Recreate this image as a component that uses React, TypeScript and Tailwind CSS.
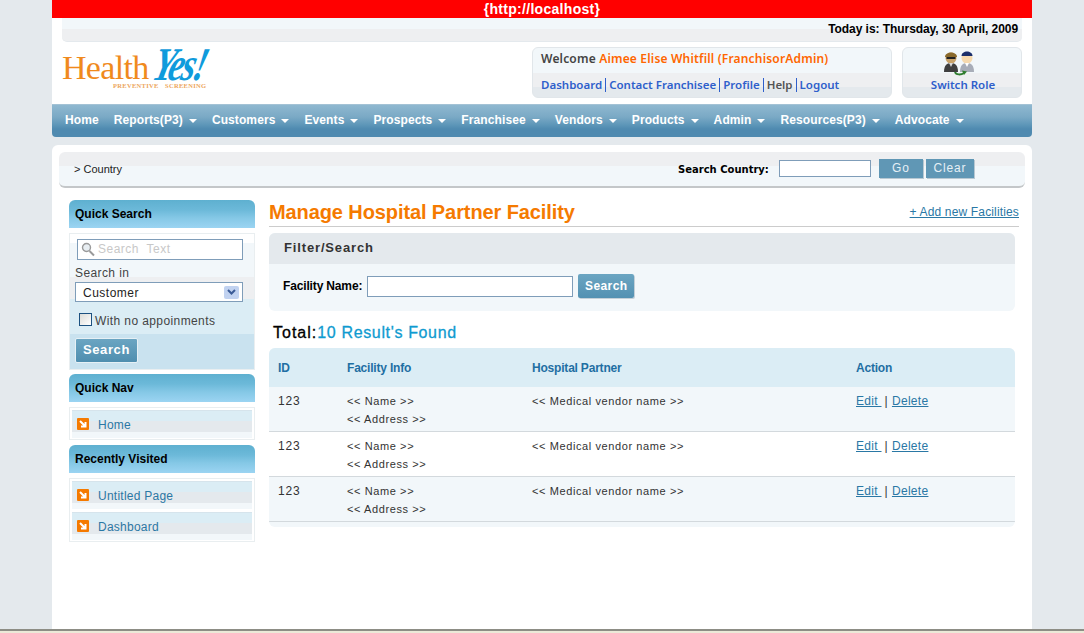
import React from "react";

const NAV_ITEMS = [
  { label: "Home", caret: false },
  { label: "Reports(P3)", caret: true },
  { label: "Customers", caret: true },
  { label: "Events", caret: true },
  { label: "Prospects", caret: true },
  { label: "Franchisee", caret: true },
  { label: "Vendors", caret: true },
  { label: "Products", caret: true },
  { label: "Admin", caret: true },
  { label: "Resources(P3)", caret: true },
  { label: "Advocate", caret: true },
];

const ROWS = [
  { id: 1, bg: "bg-[#f2f7fa]" },
  { id: 2, bg: "bg-white" },
  { id: 3, bg: "bg-[#f2f7fa]" },
];

const SANS = "font-['Liberation_Sans',Arial,sans-serif]";
const VERDANA = "font-['DejaVu_Sans',Verdana,sans-serif]";
const TAHOMA = "font-['Noto_Sans',Tahoma,sans-serif]";

export default function App() {
  return (
    <div className={`h-[633px] w-[1084px] overflow-hidden flex flex-col bg-[#e4e9ed] ${SANS}`}>
      <div className="flex-1 w-[980px] ml-[52px] flex flex-col min-h-0">
        <TopHeader />
        <Nav />
        <div className="flex-1 mt-[8px] bg-white rounded-t-[6px] pt-[7px]">
          <Breadcrumb />
          <div className="flex pl-[17px] pt-[12px]">
            <Sidebar />
            <MainContent />
          </div>
        </div>
      </div>
      {/* browser status bar edge */}
      <div className="h-[4px] border-t-2 border-[#8d8d85] bg-[#ece9d8]" />
    </div>
  );
}

function TopHeader() {
  return (
    <div className="bg-white">
      <div className="h-[18px] bg-[#ff0000] text-white text-[14px] leading-[18px] font-bold text-center tracking-[0.3px]">
        {"{http://localhost}"}
      </div>
      <div className="mx-[10px] h-[24px] rounded-b-[5px] border-b border-[#e4e9ed] bg-[linear-gradient(#f2f7fa_0,#f2f7fa_11px,#eeeff1_11px)] pr-[4px] text-right text-[12px] leading-[22px] font-bold text-black tracking-[-0.06px]">
        Today is: Thursday, 30 April, 2009
      </div>
      <div className="h-[62px] flex pl-[10px] pr-[10px] pt-[5px]">
        <Logo />
        <div className={`ml-[320px] w-[360px] h-[51px] rounded-[6px] border border-[#e1e6ea] bg-[linear-gradient(#f2f7fa_0,#f2f7fa_25px,#eeeff1_25px,#eeeff1_39px,#e4e9ed_39px)] pl-[8px] ${TAHOMA}`}>
          <div className="h-[22px] text-[12px] leading-[21px] font-semibold text-[#444] tracking-[0.18px]">
            Welcome <span className="text-[#ff6600]">Aimee Elise Whitfill (FranchisorAdmin)</span>
          </div>
          <div className="mt-[8px] flex items-center text-[11.5px] leading-[14px] font-semibold text-[#2f5fcb]">
            <span className="pr-[3px] border-r border-[#2f5fcb]">Dashboard</span>
            <span className="px-[3px] border-r border-[#2f5fcb]">Contact Franchisee</span>
            <span className="px-[3px] border-r border-[#2f5fcb]">Profile</span>
            <span className="px-[3px] border-r border-[#2f5fcb] text-[#555]">Help</span>
            <span className="pl-[3px]">Logout</span>
          </div>
        </div>
        <div className={`ml-[10px] w-[120px] h-[51px] rounded-[6px] border border-[#e1e6ea] bg-[linear-gradient(#f2f7fa_0,#f2f7fa_25px,#eeeff1_25px,#eeeff1_39px,#e4e9ed_39px)] flex flex-col items-center ${TAHOMA}`}>
          <SwitchRoleIcon />
          <span className="mt-[1px] ml-[2px] text-[11.5px] leading-[14px] font-semibold text-[#2f5fcb]">Switch Role</span>
        </div>
      </div>
    </div>
  );
}

function Logo() {
  return (
    <div className="relative w-[150px] h-[50px]">
      <span className="absolute left-0 top-[3px] font-['Liberation_Serif',serif] text-[34px] leading-[36px] tracking-[-0.7px] text-[#f08a1d]">
        Health
      </span>
      <span className="absolute left-[99px] top-[-8px] origin-top-left font-['Liberation_Serif',serif] italic font-bold text-[46px] leading-[50px] tracking-[-3px] text-[#0f9bdc] [transform:skewX(-14deg)_scale(0.76,1.02)]">
        Yes!
      </span>
      <span className="absolute left-[51px] top-[34px] font-['Liberation_Serif',serif] font-bold text-[6.5px] leading-[10px] tracking-[0.3px] text-[#eda65c]">
        PREVENTIVE
      </span>
      <span className="absolute left-[103px] top-[34px] font-['Liberation_Serif',serif] font-bold text-[6.5px] leading-[10px] tracking-[0.3px] text-[#eda65c]">
        SCREENING
      </span>
    </div>
  );
}

function SwitchRoleIcon() {
  return (
    <svg width="34" height="26" viewBox="0 0 34 26" className="mt-[2px] mb-[1px] mr-[6px]">
      {/* left person */}
      <path d="M2 22 C2 15 5 13 9 13 C13 13 16 15 16 22 Z" fill="#3f3f3f" />
      <circle cx="9" cy="8" r="5.5" fill="#c9a36a" />
      <path d="M3 7 C3 1 15 1 15 7 Z" fill="#8a6a2c" />
      <rect x="4.5" y="7" width="9" height="2" fill="#222" />
      <path d="M7 13 L11 13 L9 17 Z" fill="#d8d8d8" />
      {/* right person */}
      <path d="M18 22 C18 15 21 13 25 13 C29 13 32 15 32 22 Z" fill="#a8adb8" />
      <circle cx="25" cy="8" r="5.5" fill="#f6d9ae" />
      <path d="M19.5 6 C19.5 0 30.5 0 30.5 6 Z" fill="#1c2f6b" />
      <path d="M23 13 L27 13 L25 17 Z" fill="#ffffff" />
      {/* swap arrow */}
      <path d="M13 22 C14 25 19 25 22 23" stroke="#2f7d2f" strokeWidth="2" fill="none" />
      <path d="M20 20.5 L25 21.5 L22 25 Z" fill="#2f7d2f" />
    </svg>
  );
}

function Nav() {
  return (
    <div className="h-[33px] rounded-b-[4px] border-t border-[#a3c2d5] bg-[linear-gradient(#8fb8d0_0,#7aa9c5_12px,#5d96b8_20px,#4f8ab0_24px,#4f8ab0_100%)] flex items-center gap-[15px] pl-[13px] pb-[2px]">
      {NAV_ITEMS.map((item) => (
        <div key={item.label} className="flex items-center text-[12px] font-bold leading-[16px] text-white tracking-[0.1px]">
          {item.label}
          {item.caret && (
            <span className="ml-[6px] mt-[2px] w-0 h-0 border-x-[4px] border-x-transparent border-t-[4px] border-t-white" />
          )}
        </div>
      ))}
    </div>
  );
}

function Breadcrumb() {
  return (
    <div className="mx-[7px] h-[36px] rounded-[6px] border-b-2 border-[#c4c7c9] bg-[linear-gradient(#eeeff1_0,#eeeff1_14px,#f2f7fa_14px)] flex items-center pl-[15px]">
      <span className="text-[11px] text-[#222]">&gt; Country</span>
      <span className={`ml-[556px] text-[10px] font-bold text-black ${VERDANA}`}>Search Country:</span>
      <input className="ml-[10px] w-[92px] h-[17px] mb-[1px] border border-[#7f9db9] bg-white" />
      <SmallButton className="ml-[8px] w-[44px]">Go</SmallButton>
      <SmallButton className="ml-[3px] w-[48px]">Clear</SmallButton>
    </div>
  );
}

function SmallButton({ className, children }: { className: string; children: React.ReactNode }) {
  return (
    <button className={`h-[19px] mb-[1px] bg-[#6097b5] text-[#e6f0f5] text-[12px] leading-[19px] tracking-[0.8px] text-center shadow-[1px_1px_0_#b8c8d2] ${className}`}>
      {children}
    </button>
  );
}

function SectionTitle({ children }: { children: React.ReactNode }) {
  return (
    <div className="h-[28px] rounded-t-[6px] bg-[linear-gradient(#5eb0d0_0,#6cb9d9_10px,#85c8e6_18px,#9bd4f2_100%)] pl-[6px] text-[12px] font-bold leading-[28px] text-black">
      {children}
    </div>
  );
}

function Sidebar() {
  return (
    <div className="w-[186px] shrink-0 flex flex-col">
      <SectionTitle>Quick Search</SectionTitle>
      <div className="mt-[5px] h-[137px] border border-[#e9eef0] bg-[linear-gradient(#fff_0,#fff_9px,#f2f7fa_9px,#f2f7fa_43px,#eeeff1_43px,#eeeff1_65px,#dbedf5_65px,#dbedf5_100px,#c9e2ef_100px)] px-[5px] pt-[5px] text-[#444] text-[12px]">
        <div className="ml-[2px] w-[166px] h-[21px] border border-[#7f9db9] bg-white flex items-center pl-[3px] pb-[1px]">
          <svg width="14" height="15" viewBox="0 0 14 15">
            <circle cx="5.5" cy="5.5" r="4" fill="#e8eef2" stroke="#9a9a9a" strokeWidth="1.4" />
            <path d="M8.5 9 L13 13.5" stroke="#9a9a9a" strokeWidth="2" />
          </svg>
          <span className="ml-[3px] text-[#c8c8c8] tracking-[0.5px]">Search&nbsp; Text</span>
        </div>
        <div className="mt-[6px] h-[14px] leading-[14px] tracking-[0.4px]">Search in</div>
        <div className="mt-[2px] w-[168px] h-[20px] border border-[#7f9db9] bg-white flex items-center justify-between pl-[7px] pr-[3px] pt-[2px] text-[#222] tracking-[0.5px]">
          Customer
          <span className="w-[15px] h-[13px] -mt-[2px] rounded-[2px] bg-[#c1d2f0] flex items-center justify-center">
            <svg width="9" height="6" viewBox="0 0 9 6">
              <path d="M1 1 L4.5 4.5 L8 1" stroke="#3a5a96" strokeWidth="2" fill="none" />
            </svg>
          </span>
        </div>
        <div className="mt-[11px] ml-[4px] flex items-center h-[13px]">
          <span className="w-[13px] h-[13px] border border-[#1c5180] bg-[linear-gradient(135deg,#dcdcd7,#fff)]" />
          <span className="ml-[3px] pt-[2px] text-[#444] tracking-[0.4px]">With no appoinments</span>
        </div>
        <button className="mt-[12px] block w-[63px] h-[25px] rounded-[2px] border border-[#e6f0f5] bg-[linear-gradient(#6ba5c2,#4f8eaf)] text-white text-[13px] font-bold tracking-[0.6px] leading-[19px] pb-[2px]">
          Search
        </button>
      </div>

      <div className="mt-[4px]">
        <SectionTitle>Quick Nav</SectionTitle>
      </div>
      <div className="mt-[5px] border border-[#e9eef0] p-[2px] pb-[1px]">
        <SideLink label="Home" />
      </div>

      <div className="mt-[5px]">
        <SectionTitle>Recently Visited</SectionTitle>
      </div>
      <div className="mt-[5px] border border-[#e9eef0] p-[2px] pb-[1px] flex flex-col gap-[3px]">
        <SideLink label="Untitled Page" />
        <SideLink label="Dashboard" />
      </div>
    </div>
  );
}

function SideLink({ label }: { label: string }) {
  return (
    <div className="h-[28px] border-t border-[#d6e4ec] bg-[linear-gradient(#dbedf5_0,#dbedf5_10px,#e4e9ed_10px,#e4e9ed_21px,#f2f7fa_21px)] flex items-center pl-[5px] pb-[2px] text-[12px] text-[#2a78a5] tracking-[0.25px]">
      <svg width="12" height="12" viewBox="0 0 12 12" className="shrink-0">
        <rect width="12" height="12" rx="1" fill="#f57a00" />
        <path d="M3 3 L8 8 M8.5 4 V8.5 H4" stroke="#fff" strokeWidth="2" fill="none" />
      </svg>
      <span className="ml-[9px] mt-[2px]">{label}</span>
    </div>
  );
}

function MainContent() {
  return (
    <div className="ml-[14px] w-[750px]">
      <div className="h-[27px] border-b border-[#cccccc] flex items-start justify-between">
        <h1 className="text-[20px] leading-[24px] font-bold text-[#f57a00] tracking-[-0.1px]">
          Manage Hospital Partner Facility
        </h1>
        <a className="mt-[5px] text-[12px] leading-[14px] text-[#2a78a5] underline tracking-[0.15px]">+ Add new Facilities</a>
      </div>

      <div className="mt-[6px] w-[746px] h-[78px] rounded-[6px] bg-[#f2f7fa] overflow-hidden">
        <div className="h-[31px] bg-[#e4e9ed] pl-[15px] text-[13px] font-bold leading-[29px] text-[#333] tracking-[0.85px]">
          Filter/Search
        </div>
        <div className="flex items-center pl-[14px] pt-[10px]">
          <span className="text-[12px] font-bold text-black tracking-[-0.15px]">Facility Name:</span>
          <input className="ml-[5px] w-[206px] h-[21px] border border-[#7f9db9] bg-white" />
          <button className="ml-[5px] w-[56px] h-[24px] rounded-[2px] bg-[linear-gradient(#6ba5c2,#5391b2)] text-white text-[12px] font-bold tracking-[0.4px] shadow-[1px_1px_0_#c4d0d8]">
            Search
          </button>
        </div>
      </div>

      <div className="mt-[11px] h-[22px] pl-[4px] text-[16px] leading-[22px] text-black tracking-[1px] [-webkit-text-stroke:0.3px_currentColor]">
        Total:<span className="text-[#0f9bd0] tracking-[0.65px]">10 Result's Found</span>
      </div>

      <div className="mt-[4px] w-[746px] h-[179px] rounded-[6px] bg-[#f2f7fa] overflow-hidden">
        <div className="h-[39px] bg-[#dbedf5] grid grid-cols-[69px_185px_324px_1fr] px-[9px] items-center text-[12px] font-bold text-[#1f6fa3] tracking-[-0.2px]">
          <div>ID</div>
          <div>Facility Info</div>
          <div>Hospital Partner</div>
          <div>Action</div>
        </div>
        {ROWS.map((row) => (
          <div
            key={row.id}
            className={`h-[45px] border-b border-[#d3d9dd] grid grid-cols-[69px_185px_324px_1fr] px-[9px] pt-[5px] text-[12px] leading-[18px] text-[#333] tracking-[0.3px] ${row.bg}`}
          >
            <div className="tracking-[0.8px]">123</div>
            <div className="text-[11px] tracking-[0.6px]">
              <div>&lt;&lt; Name &gt;&gt;</div>
              <div>&lt;&lt; Address &gt;&gt;</div>
            </div>
            <div className="text-[11px] tracking-[0.6px]">&lt;&lt; Medical vendor name &gt;&gt;</div>
            <div>
              <a className="text-[#2a78a5] underline">Edit&nbsp;</a>
              <span className="mx-[3px]">|</span>
              <a className="ml-[1px] text-[#2a78a5] underline">Delete</a>
            </div>
          </div>
        ))}
      </div>
    </div>
  );
}
